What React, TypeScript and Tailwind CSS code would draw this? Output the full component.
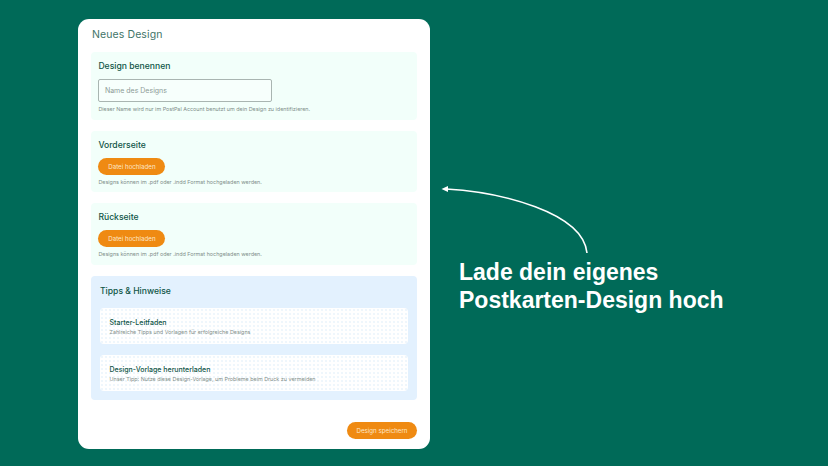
export default function App() {
  const font = "font-['Inter',sans-serif]";
  const heading = "text-[8.6px] leading-[14px] font-[450] text-[#0f5546]";
  const hint = "text-[5.4px] leading-[8px] text-[#7f8e8a]";
  const btn = "h-[17px] rounded-full bg-[#ef8a12] flex items-center justify-center text-[6.2px] text-[#fde6c8]";
  const tip = "h-[36px] rounded-[4px] bg-white bg-[radial-gradient(#eef6fc_0.7px,transparent_0.8px)] bg-[length:4px_4px] pl-[9.5px] pt-[1.5px] flex flex-col justify-center";
  const tipTitle = "text-[7px] leading-[10px] font-[450] text-[#0f5546]";
  return (
    <div className={`w-[828px] h-[466px] bg-[#006a58] overflow-hidden relative flex items-start ${font}`}>
      <div className="ml-[78px] mt-[19px] w-[352px] h-[430px] bg-white rounded-[11px] px-[13px] flex flex-col shrink-0">
        <h1 className="mt-[8px] ml-[1px] h-[15px] text-[10.5px] leading-[15px] tracking-[0.1px] text-[#3f7468] font-normal">Neues Design</h1>
        <section className="mt-[10px] h-[68px] rounded-[4px] bg-[#f2fffa] px-[7.4px] pt-[7px]">
          <h2 className={heading}>Design benennen</h2>
          <div className="mt-[6px] w-[174px] h-[23px] rounded-[2px] border border-[#a9b5b1] bg-[#f7fffc] flex items-center px-[5.5px] pt-[1px] text-[7px] text-[#8d9b97]">Name des Designs</div>
          <p className={`mt-[3px] ${hint}`}>Dieser Name wird nur im PostPal Account benutzt um dein Design zu identifizieren.</p>
        </section>
        <section className="mt-[11px] h-[61px] rounded-[4px] bg-[#f2fffa] px-[7.4px] pt-[7px]">
          <h2 className={heading}>Vorderseite</h2>
          <div className={`mt-[6px] w-[67px] ${btn}`}>Datei hochladen</div>
          <p className={`mt-[3px] ${hint}`}>Designs können im .pdf oder .indd Format hochgeladen werden.</p>
        </section>
        <section className="mt-[11px] h-[62px] rounded-[4px] bg-[#f2fffa] px-[7.4px] pt-[7px]">
          <h2 className={heading}>Rückseite</h2>
          <div className={`mt-[6px] w-[67px] ${btn}`}>Datei hochladen</div>
          <p className={`mt-[3px] ${hint}`}>Designs können im .pdf oder .indd Format hochgeladen werden.</p>
        </section>
        <section className="mt-[11px] h-[124px] rounded-[4px] bg-[#e3f1fe] px-[9px] pt-[8px]">
          <h2 className={heading}>Tipps &amp; Hinweise</h2>
          <div className={`mt-[10px] ${tip}`}>
            <div className={tipTitle}>Starter-Leitfaden</div>
            <div className={hint}>Zahlreiche Tipps und Vorlagen für erfolgreiche Designs</div>
          </div>
          <div className={`mt-[11px] ${tip}`}>
            <div className={tipTitle}>Design-Vorlage herunterladen</div>
            <div className={hint}>Unser Tipp: Nutze diese Design-Vorlage, um Probleme beim Druck zu vermeiden</div>
          </div>
        </section>
        <div className="mt-[22px] flex justify-end">
          <div className={`w-[70px] ${btn}`}>Design speichern</div>
        </div>
      </div>
      <svg className="absolute left-[436px] top-[180px]" width="160" height="80" viewBox="0 0 160 80" fill="none">
        <path d="M10 9 C 64 12, 147 32, 151 73" stroke="white" strokeWidth="1.6" />
        <path d="M5.5 9 L12 6 L12 12 Z" fill="white" />
      </svg>
      <div className="absolute left-[459px] top-[258px] text-[23px] leading-[28px] font-bold text-white font-['Liberation_Sans',sans-serif]">
        <div>Lade dein eigenes</div>
        <div>Postkarten-Design hoch</div>
      </div>
    </div>
  );
}
